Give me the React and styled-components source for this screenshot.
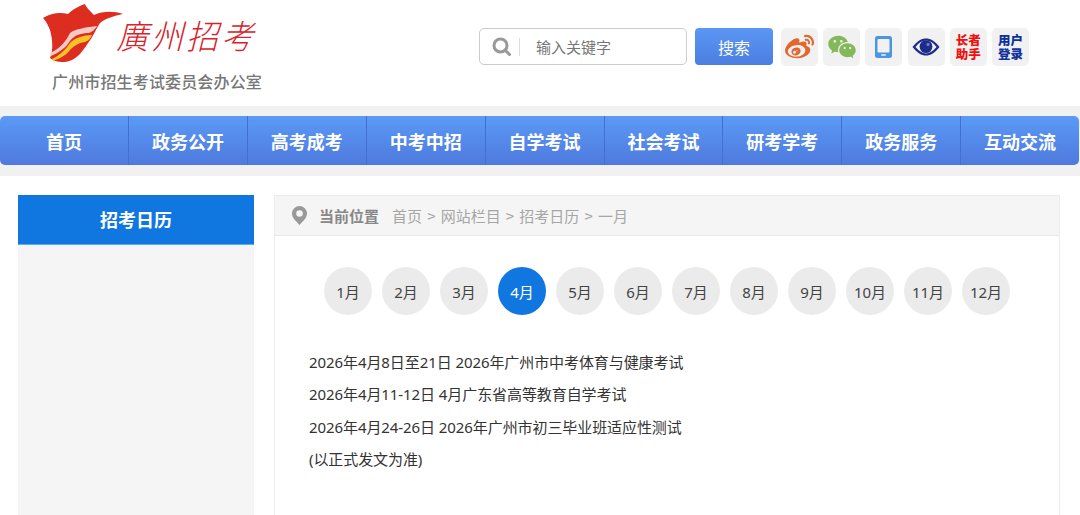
import React from "react";
import styled, { createGlobalStyle } from "styled-components";
import { FaWeibo } from "react-icons/fa";
import { RiWechatFill } from "react-icons/ri";

const GlobalStyle = createGlobalStyle`
  html, body {
    margin: 0;
    height: 515px;
    overflow: hidden;
    background: #fff;
    font-family: "Noto Sans", "Noto Sans CJK SC", sans-serif;
  }
`;

const Header = styled.header`
  height: 106px;
  display: flex;
  align-items: flex-start;
  box-sizing: border-box;
  padding: 3px 51px 0 42px;
  justify-content: space-between;
`;

const Brand = styled.div`
  width: 222px;
  display: flex;
  flex-direction: column;
`;

const BrandTop = styled.div`
  display: flex;
  align-items: flex-start;
  height: 66px;
`;

const BrandName = styled.span`
  font-family: "Noto Sans CJK SC", sans-serif;
  font-weight: 300;
  font-size: 32px;
  line-height: 40px;
  letter-spacing: 3px;
  color: #d8232a;
  white-space: nowrap;
  margin: 11px 0 0 -6px;
  transform: skewX(-14deg) scaleY(1.05);
`;

const BrandSub = styled.div`
  font-family: "Noto Sans CJK SC", sans-serif;
  font-size: 16px;
  font-weight: 500;
  line-height: 24px;
  letter-spacing: 0.15px;
  color: #777;
  margin-left: 10px;
  white-space: nowrap;
`;

const Tools = styled.div`
  display: flex;
  align-items: flex-start;
  margin-top: 25px;
`;

const SearchBox = styled.div`
  width: 208px;
  height: 37px;
  box-sizing: border-box;
  border: 1px solid #ccc;
  border-radius: 5px;
  display: flex;
  align-items: center;
  padding-left: 12px;
`;

const SearchDivider = styled.span`
  width: 1px;
  height: 18px;
  background: #ddd;
  margin: 0 16px 0 8px;
`;

const SearchInput = styled.span`
  font-family: "Noto Sans CJK SC", sans-serif;
  font-size: 15px;
  color: #777;
`;

const SearchButton = styled.button`
  width: 78px;
  height: 37px;
  margin: 0 8px;
  border: 0;
  padding: 0;
  border-radius: 4px;
  background: linear-gradient(#5b97f5, #4a7ee0);
  color: #fff;
  font-family: "Noto Sans CJK SC", sans-serif;
  font-size: 16px;
`;

const IconRow = styled.div`
  display: flex;
  gap: 5.2px;
`;

const IconTile = styled.div`
  width: 37px;
  height: 38px;
  background: #f1f1f1;
  border-radius: 5px;
  display: flex;
  align-items: center;
  justify-content: center;
`;

const TileText = styled.span`
  font-family: "Noto Sans CJK SC", sans-serif;
  font-weight: 900;
  font-size: 12.5px;
  line-height: 14px;
  width: 26px;
  text-align: center;
  color: ${(p) => p.$color};
`;

const NavBand = styled.div`
  background: #f1f1f1;
  height: 70px;
  padding-top: 10px;
  box-sizing: border-box;
`;

const Nav = styled.nav`
  height: 49px;
  display: flex;
  border-radius: 5px;
  margin-right: 1px;
  background: linear-gradient(#5b9af6, #4e79dd);
`;

const NavItem = styled.a`
  flex: ${(p) => (p.$first ? "0 0 128px" : "1 1 0")};
  box-sizing: border-box;
  display: flex;
  align-items: center;
  justify-content: center;
  color: #fff;
  font-family: "Noto Sans CJK SC", sans-serif;
  font-weight: 700;
  font-size: 18px;
  border-left: ${(p) => (p.$first ? "0" : "1px solid #4370cf")};
`;

const Content = styled.div`
  display: flex;
  gap: 20px;
  padding: 19px 20px 0 18px;
`;

const Sidebar = styled.aside`
  width: 236px;
  flex: none;
  min-height: 340px;
  background: #f5f5f5;
`;

const SidebarTitle = styled.h2`
  margin: 0;
  height: 50px;
  box-sizing: border-box;
  background: #1077e0;
  border-bottom: 1px solid #63a8ef;
  color: #fff;
  font-family: "Noto Sans CJK SC", sans-serif;
  font-weight: 700;
  font-size: 18px;
  line-height: 49px;
  text-align: center;
`;

const Main = styled.main`
  flex: 1;
  min-height: 340px;
  box-sizing: border-box;
  border: 1px solid #ececec;
`;

const Crumbs = styled.div`
  height: 39px;
  background: #f5f5f5;
  border-bottom: 1px solid #e8e8e8;
  display: flex;
  align-items: center;
  padding-left: 17px;
  font-family: "Noto Sans CJK SC", sans-serif;
  font-size: 15px;
  word-spacing: 1.8px;
  white-space: pre;
  color: #a6a6a6;
`;

const CrumbLabel = styled.b`
  color: #888;
  font-weight: 700;
  margin: 0 13px 0 12px;
`;

const Months = styled.div`
  display: flex;
  gap: 10px;
  padding: 31px 0 0 49px;
`;

const Month = styled.a`
  width: 48px;
  height: 48px;
  border-radius: 50%;
  display: flex;
  align-items: center;
  justify-content: center;
  font-family: "Noto Sans", "Noto Sans CJK SC", sans-serif;
  font-size: 15px;
  background: ${(p) => (p.$active ? "#1077e0" : "#ebebeb")};
  color: ${(p) => (p.$active ? "#fff" : "#444")};
`;

const Notes = styled.div`
  padding: 31px 0 0 34px;
`;

const Note = styled.p`
  margin: 0;
  font-family: "Noto Sans", "Noto Sans CJK SC", sans-serif;
  font-size: 15px;
  line-height: 32.4px;
  letter-spacing: -0.08px;
  color: #333;
  white-space: nowrap;
`;

const SearchIcon = () => (
  <svg width="19" height="19" viewBox="0 0 19 19" fill="none" stroke="#999" strokeWidth="3">
    <circle cx="8.5" cy="8.5" r="6.5" />
    <path d="M13 13l4.5 4.5" strokeLinecap="round" />
  </svg>
);

const PhoneIcon = () => (
  <svg width="17" height="22" viewBox="0 0 17 22">
    <rect width="17" height="22" rx="2.5" fill="#4b96e2" />
    <rect x="2.5" y="3" width="12" height="13.5" rx="1" fill="#f1f1f1" />
    <rect x="6" y="18.2" width="5" height="1.6" rx="0.8" fill="#f1f1f1" />
  </svg>
);

const EyeIcon = () => (
  <svg width="28" height="18" viewBox="0 0 28 18">
    <path d="M0.5 9C5 3 9.5 0.5 14 0.5S23 3 27.5 9C23 15 18.5 17.5 14 17.5S5 15 0.5 9Z" fill="#1d2c8c" />
    <path d="M3.5 9C7 4.6 10.5 2.6 14 2.6S21 4.6 24.5 9C21 13.4 17.5 15.4 14 15.4S7 13.4 3.5 9Z" fill="#f1f1f1" />
    <circle cx="14" cy="8.6" r="6.4" fill="#1d2c8c" />
    <circle cx="16" cy="6.4" r="1.6" fill="#6f7cc8" />
  </svg>
);

const PinIcon = () => (
  <svg width="15" height="19" viewBox="0 0 15 19">
    <path
      fillRule="evenodd"
      d="M7.5 0A7.5 7.5 0 0 0 0 7.5C0 12 4.5 15.5 7.5 19C10.5 15.5 15 12 15 7.5A7.5 7.5 0 0 0 7.5 0ZM7.5 4.2A3.3 3.3 0 1 1 7.5 10.8A3.3 3.3 0 0 1 7.5 4.2Z"
      fill="#999"
    />
  </svg>
);

const TulipLogo = () => (
  <svg width="84" height="60" viewBox="0 0 84 60" style={{ flex: "none" }}>
    <path
      d="M1 15C9 10 18 9 26 11C30 7 37 3 43 1C44 4 48 8 52 12C61 8 72 8 81 11C72 13 64 15 58 20C54 26 51 34 46 40C41 48 36 54 30 57C24 60 13 60 8 55C11 48 11 38 8 27C6 22 4 18 1 15Z"
      fill="#dd2c20"
    />
    <path d="M8 50C18 46 24 38 28 30C33 26 45 24 55 23C52 28 49 29 47 30C40 30 32 32 28 38C24 45 16 50 9 53Z" fill="#f7c9c4" />
    <path d="M10 56C18 52 24 46 28 40C32 35 42 32 50 32C48 36 46 38 43 39C36 40 32 43 28 47C24 53 16 56 11 58Z" fill="#f7c325" />
  </svg>
);

const navItems = ["首页", "政务公开", "高考成考", "中考中招", "自学考试", "社会考试", "研考学考", "政务服务", "互动交流"];
const months = ["1月", "2月", "3月", "4月", "5月", "6月", "7月", "8月", "9月", "10月", "11月", "12月"];
const notes = [
  "2026年4月8日至21日 2026年广州市中考体育与健康考试",
  "2026年4月11-12日 4月广东省高等教育自学考试",
  "2026年4月24-26日 2026年广州市初三毕业班适应性测试",
  "(以正式发文为准)",
];

export default function App() {
  return (
    <>
      <GlobalStyle />
      <Header>
        <Brand>
          <BrandTop>
            <TulipLogo />
            <BrandName>廣州招考</BrandName>
          </BrandTop>
          <BrandSub>广州市招生考试委员会办公室</BrandSub>
        </Brand>
        <Tools>
          <SearchBox>
            <SearchIcon />
            <SearchDivider />
            <SearchInput>输入关键字</SearchInput>
          </SearchBox>
          <SearchButton>搜索</SearchButton>
          <IconRow>
            <IconTile>
              <FaWeibo size={29} color="#e2672f" />
            </IconTile>
            <IconTile>
              <RiWechatFill size={30} color="#83b958" />
            </IconTile>
            <IconTile>
              <PhoneIcon />
            </IconTile>
            <IconTile>
              <EyeIcon />
            </IconTile>
            <IconTile>
              <TileText $color="#ee1111">长者助手</TileText>
            </IconTile>
            <IconTile>
              <TileText $color="#10329c">用户登录</TileText>
            </IconTile>
          </IconRow>
        </Tools>
      </Header>
      <NavBand>
        <Nav>
          {navItems.map((item, i) => (
            <NavItem key={item} $first={i === 0}>
              {item}
            </NavItem>
          ))}
        </Nav>
      </NavBand>
      <Content>
        <Sidebar>
          <SidebarTitle>招考日历</SidebarTitle>
        </Sidebar>
        <Main>
          <Crumbs>
            <PinIcon />
            <CrumbLabel>当前位置</CrumbLabel>
            {"首页 > 网站栏目 > 招考日历 > 一月"}
          </Crumbs>
          <Months>
            {months.map((m) => (
              <Month key={m} $active={m === "4月"}>
                {m}
              </Month>
            ))}
          </Months>
          <Notes>
            {notes.map((n) => (
              <Note key={n}>{n}</Note>
            ))}
          </Notes>
        </Main>
      </Content>
    </>
  );
}
